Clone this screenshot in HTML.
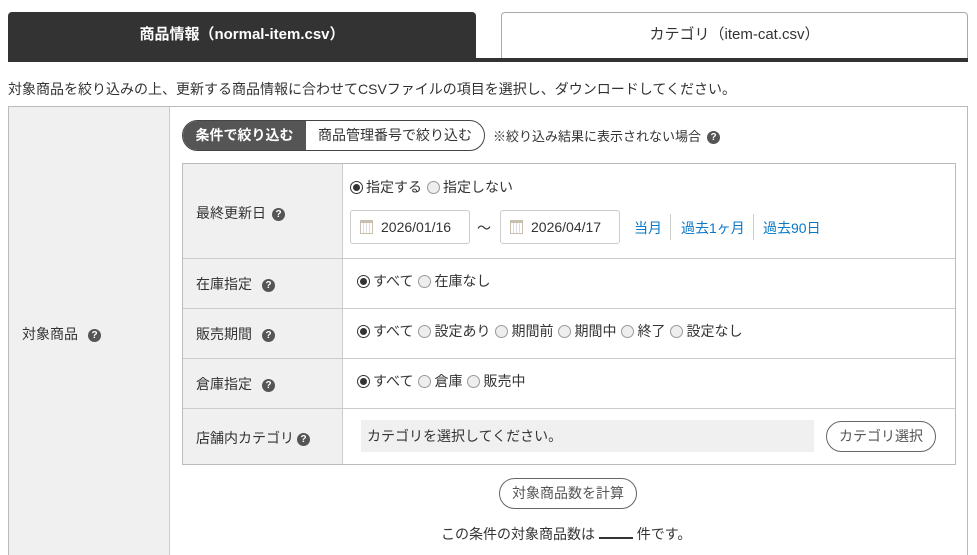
<!DOCTYPE html>
<html><head><meta charset="utf-8"><style>
*{box-sizing:border-box;margin:0;padding:0}
html,body{width:977px;height:555px;overflow:hidden}
body{background:#fff;font-family:"Liberation Sans","Noto Sans CJK JP",sans-serif;font-size:13px;color:#333;position:relative}
.a{position:absolute}
.q{display:inline-block;width:13px;height:13px;border-radius:50%;background:#555;color:#fff;font-size:10px;font-weight:bold;text-align:center;line-height:13px;vertical-align:middle;margin-left:6px}
.r{display:inline-block;width:13px;height:13px;border-radius:50%;border:1px solid #999;background:#eee;vertical-align:-2px;margin-right:3px;margin-left:5px;position:relative}
.r:first-child{margin-left:0}
.r.on{border-color:#333;background:#fff}
.r.on::after{content:"";position:absolute;left:2px;top:2px;width:7px;height:7px;border-radius:50%;background:#333}
.lbl{background:#f0f0f0}
.date{border:1px solid #ccc;border-radius:3px;height:34px;width:120px;padding-left:30px;line-height:32px;font-size:14px}
.cal{position:absolute;left:9px;top:9px;width:13px;height:14px;border:1px solid #c9bfae;border-top:3px solid #c9bfae;background:repeating-linear-gradient(90deg,#fff 0 2px,#ddd 2px 3px)}
.lnk{color:#0a78c8;font-size:14px}
.btn{border:1px solid #666;border-radius:16px;text-align:center;font-size:14px;color:#555;line-height:28px}
</style></head><body>
<div class="a" style="left:8px;top:12px;width:468px;height:48px;background:#333;border-radius:4px 4px 0 0;color:#fff;font-weight:bold;font-size:15px;text-align:center;line-height:46px">商品情報（normal-item.csv）</div>
<div class="a" style="left:501px;top:12px;width:467px;height:47px;border:1px solid #aaa;border-bottom:none;border-radius:4px 4px 0 0;font-size:15px;text-align:center;line-height:44px">カテゴリ（item-cat.csv）</div>
<div class="a" style="left:8px;top:58px;width:960px;height:4px;background:#333"></div>
<div class="a" style="left:8px;top:79px;font-size:14px">対象商品を絞り込みの上、更新する商品情報に合わせてCSVファイルの項目を選択し、ダウンロードしてください。</div>
<div class="a" style="left:8px;top:106px;width:960px;height:460px;border:1px solid #bbb"></div>
<div class="a lbl" style="left:9px;top:107px;width:161px;height:460px;border-right:1px solid #ccc"></div>
<div class="a" style="left:22px;top:324px;font-size:14px">対象商品<span class="q" style="margin-left:10px">?</span></div>
<div class="a" style="left:182px;top:120px;width:303px;height:31px;border:1px solid #444;border-radius:16px;overflow:hidden;font-size:14px;line-height:29px">
<div class="a" style="left:0;top:0;width:123px;height:29px;background:#555;color:#fff;font-weight:bold;text-align:center">条件で絞り込む</div>
<div class="a" style="left:123px;top:0;width:178px;height:29px;text-align:center">商品管理番号で絞り込む</div></div>
<div class="a" style="left:493px;top:126px">※絞り込み結果に表示されない場合<span class="q">?</span></div>
<div class="a" style="left:182px;top:163px;width:774px;height:302px;border:1px solid #bbb"></div>
<div class="a lbl" style="left:183px;top:164px;width:160px;height:300px;border-right:1px solid #ccc"></div>
<div class="a" style="left:183px;top:258px;width:772px;border-top:1px solid #ccc"></div>
<div class="a" style="left:183px;top:308px;width:772px;border-top:1px solid #ccc"></div>
<div class="a" style="left:183px;top:358px;width:772px;border-top:1px solid #ccc"></div>
<div class="a" style="left:183px;top:408px;width:772px;border-top:1px solid #ccc"></div>
<div class="a" style="left:196px;top:203px;font-size:14px">最終更新日<span class="q">?</span></div>
<div class="a" style="left:196px;top:274px;font-size:14px">在庫指定<span class="q" style="margin-left:10px">?</span></div>
<div class="a" style="left:196px;top:324px;font-size:14px">販売期間<span class="q" style="margin-left:10px">?</span></div>
<div class="a" style="left:196px;top:374px;font-size:14px">倉庫指定<span class="q" style="margin-left:10px">?</span></div>
<div class="a" style="left:196px;top:428px;font-size:14px">店舗内カテゴリ<span class="q" style="margin-left:3px">?</span></div>
<div class="a" style="left:350px;top:177px;font-size:14px"><span class="r on"></span>指定する<span class="r"></span>指定しない</div>
<div class="a date" style="left:350px;top:210px"><span class="cal"></span>2026/01/16</div>
<div class="a" style="left:477px;top:218px;font-size:14px">～</div>
<div class="a date" style="left:500px;top:210px"><span class="cal"></span>2026/04/17</div>
<div class="a lnk" style="left:634px;top:218px">当月</div>
<div class="a" style="left:670px;top:214px;height:26px;border-left:1px solid #ccc"></div>
<div class="a lnk" style="left:681px;top:218px">過去1ヶ月</div>
<div class="a" style="left:753px;top:214px;height:26px;border-left:1px solid #ccc"></div>
<div class="a lnk" style="left:763px;top:218px">過去90日</div>
<div class="a" style="left:357px;top:271px;font-size:14px"><span class="r on"></span>すべて<span class="r"></span>在庫なし</div>
<div class="a" style="left:357px;top:321px;font-size:14px"><span class="r on"></span>すべて<span class="r"></span>設定あり<span class="r"></span>期間前<span class="r"></span>期間中<span class="r"></span>終了<span class="r"></span>設定なし</div>
<div class="a" style="left:357px;top:371px;font-size:14px"><span class="r on"></span>すべて<span class="r"></span>倉庫<span class="r"></span>販売中</div>
<div class="a" style="left:361px;top:420px;width:453px;height:32px;background:#f0f0f0;line-height:32px;padding-left:6px;font-size:14px">カテゴリを選択してください。</div>
<div class="a btn" style="left:826px;top:421px;width:110px;height:31px">カテゴリ選択</div>
<div class="a btn" style="left:499px;top:478px;width:138px;height:31px">対象商品数を計算</div>
<div class="a" style="left:441px;top:524px;font-size:14px">この条件の対象商品数は <span style="display:inline-block;width:34px;border-bottom:2px solid #333"></span> 件です。</div>
</body></html>
